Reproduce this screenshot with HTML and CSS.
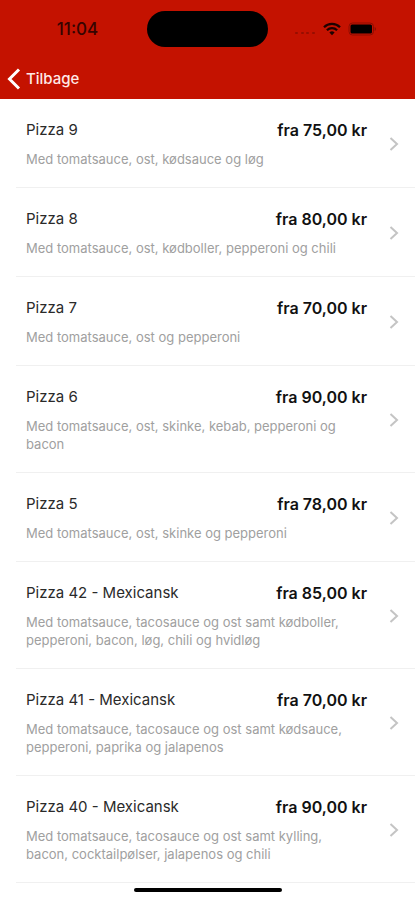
FILE: index.html
```html
<!DOCTYPE html>
<html lang="da">
<head>
<meta charset="utf-8">
<meta name="viewport" content="width=device-width, initial-scale=1">
<title>Pizza</title>
<link rel="stylesheet" href="styles.css">
</head>
<body>
<header class="header">
  <div class="status">
    <span class="time">11:04</span>
    <span class="island"></span>
    <span class="indicators">
      <svg class="signal" width="22" height="4" viewBox="0 0 22 4" aria-hidden="true"><g fill="#960e00"><rect x="1" y="1" width="3" height="2" rx="1"/><rect x="7" y="1" width="3" height="2" rx="1"/><rect x="12" y="1" width="3" height="2" rx="1"/><rect x="18" y="1" width="3" height="2" rx="1"/></g></svg>
      <svg class="wifi" width="18" height="14" viewBox="0 0 18 14" aria-hidden="true"><g fill="none" stroke="#1c0200" stroke-width="2.3"><path d="M1 5.2a11.4 11.4 0 0 1 16 0"/><path d="M3.9 8.3a7.3 7.3 0 0 1 10.2 0"/></g><path d="M6.4 10.6a3.7 3.7 0 0 1 5.2 0L9 13.3z" fill="#1c0200"/></svg>
      <svg class="battery" width="29" height="14" viewBox="0 0 29 14" aria-hidden="true"><rect x="1" y="1" width="24.5" height="12" rx="3.5" fill="none" stroke="#8d0c00"/><rect x="2.5" y="2.5" width="21.5" height="9" rx="1.5" fill="#000"/><path d="M26.7 5v4c1.8-.6 1.8-3.4 0-4z" fill="#8d0c00"/></svg>
    </span>
  </div>
  <nav class="nav">
    <a class="back" href="#">
      <svg width="14" height="22" viewBox="0 0 14 22" aria-hidden="true"><path d="M12 1.5 2.5 11l9.5 9.5" fill="none" stroke="#fff" stroke-width="3"/></svg>
      <span>Tilbage</span>
    </a>
  </nav>
</header>
<main>
  <ul class="menu">
    <li><a class="item" href="#"><span class="name">Pizza 9</span><span class="price">fra 75,00 kr</span><span class="desc">Med tomatsauce, ost, kødsauce og løg</span><svg class="chevron" width="10" height="14" viewBox="0 0 10 14" aria-hidden="true"><path d="M1.5 1 8 7l-6.5 6"/></svg></a></li>
    <li><a class="item" href="#"><span class="name">Pizza 8</span><span class="price">fra 80,00 kr</span><span class="desc">Med tomatsauce, ost, kødboller, pepperoni og chili</span><svg class="chevron" width="10" height="14" viewBox="0 0 10 14" aria-hidden="true"><path d="M1.5 1 8 7l-6.5 6"/></svg></a></li>
    <li><a class="item" href="#"><span class="name">Pizza 7</span><span class="price">fra 70,00 kr</span><span class="desc">Med tomatsauce, ost og pepperoni</span><svg class="chevron" width="10" height="14" viewBox="0 0 10 14" aria-hidden="true"><path d="M1.5 1 8 7l-6.5 6"/></svg></a></li>
    <li><a class="item" href="#"><span class="name">Pizza 6</span><span class="price">fra 90,00 kr</span><span class="desc">Med tomatsauce, ost, skinke, kebab, pepperoni og bacon</span><svg class="chevron" width="10" height="14" viewBox="0 0 10 14" aria-hidden="true"><path d="M1.5 1 8 7l-6.5 6"/></svg></a></li>
    <li><a class="item" href="#"><span class="name">Pizza 5</span><span class="price">fra 78,00 kr</span><span class="desc">Med tomatsauce, ost, skinke og pepperoni</span><svg class="chevron" width="10" height="14" viewBox="0 0 10 14" aria-hidden="true"><path d="M1.5 1 8 7l-6.5 6"/></svg></a></li>
    <li><a class="item" href="#"><span class="name">Pizza 42 - Mexicansk</span><span class="price">fra 85,00 kr</span><span class="desc">Med tomatsauce, tacosauce og ost samt kødboller, pepperoni, bacon, løg, chili og hvidløg</span><svg class="chevron" width="10" height="14" viewBox="0 0 10 14" aria-hidden="true"><path d="M1.5 1 8 7l-6.5 6"/></svg></a></li>
    <li><a class="item" href="#"><span class="name">Pizza 41 - Mexicansk</span><span class="price">fra 70,00 kr</span><span class="desc">Med tomatsauce, tacosauce og ost samt kødsauce, pepperoni, paprika og jalapenos</span><svg class="chevron" width="10" height="14" viewBox="0 0 10 14" aria-hidden="true"><path d="M1.5 1 8 7l-6.5 6"/></svg></a></li>
    <li><a class="item" href="#"><span class="name">Pizza 40 - Mexicansk</span><span class="price">fra 90,00 kr</span><span class="desc">Med tomatsauce, tacosauce og ost samt kylling, bacon, cocktailpølser, jalapenos og chili</span><svg class="chevron" width="10" height="14" viewBox="0 0 10 14" aria-hidden="true"><path d="M1.5 1 8 7l-6.5 6"/></svg></a></li>
  </ul>
</main>
<div class="home-bar"></div>
</body>
</html>
```
FILE: styles.css
```css
* {
  box-sizing: border-box;
}

body {
  margin: 0;
  background: #fff;
  color: #111;
  font-family: Inter, "Liberation Sans", sans-serif;
}

a {
  color: inherit;
  text-decoration: none;
}

.header {
  background: #c41200;
}

.status {
  display: grid;
  grid-template-columns: 1fr 121px 1fr;
  align-items: center;
  height: 58px;
}

.time {
  padding-left: 8px;
  text-align: center;
  font-size: 17px;
  font-weight: 500;
  color: #360400;
}

.island {
  height: 36px;
  border-radius: 18px;
  background: #000;
}

.indicators {
  display: flex;
  align-items: center;
  gap: 7px;
  padding-left: 26px;
}

.signal {
  margin-top: 8px;
}

.nav {
  display: flex;
  height: 41px;
  padding: 0 7px;
}

.back {
  display: flex;
  align-items: center;
  gap: 5px;
  font-size: 15px;
  font-weight: 500;
  color: #ffe9e6;
}

.menu {
  margin: 0;
  padding: 0 0 0 16px;
  list-style: none;
}

.item {
  display: grid;
  grid-template-columns: 1fr auto 10px;
  column-gap: 22px;
  row-gap: 9px;
  padding: 20px 16px 19px 10px;
  border-bottom: 1px solid #f0f0f0;
}

.name {
  font-size: 15px;
  font-weight: 400;
  line-height: 22px;
  color: #2a2a2a;
}

.price {
  font-size: 16px;
  font-weight: 600;
  line-height: 22px;
}

.desc {
  grid-column: 1 / 3;
  grid-row: 2;
  padding-right: 8px;
  font-size: 13px;
  font-weight: 400;
  line-height: 18px;
  color: #a0a0a0;
}

.chevron {
  grid-column: 3;
  grid-row: 1 / 3;
  align-self: center;
  fill: none;
  stroke: #c4c4c4;
  stroke-width: 2;
}

.home-bar {
  position: fixed;
  bottom: 8px;
  left: 50%;
  width: 148px;
  height: 4px;
  border-radius: 2px;
  background: #000;
  transform: translateX(-50%);
}
```
